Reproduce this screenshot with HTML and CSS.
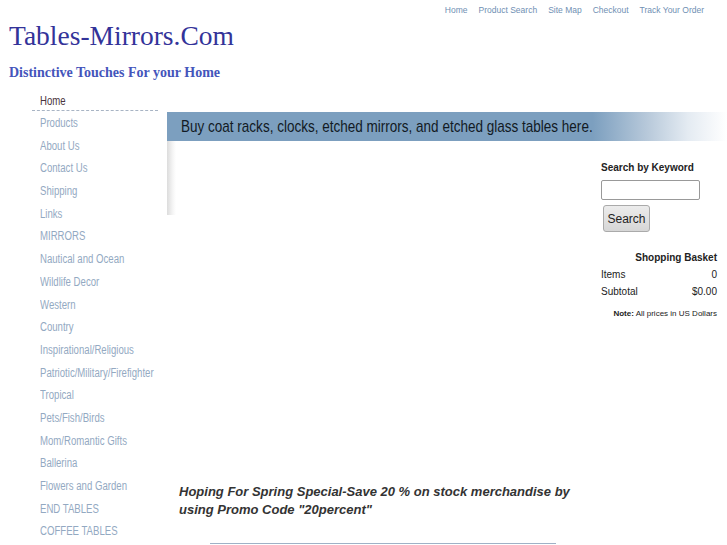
FILE: index.html
```html
<!DOCTYPE html>
<html>
<head>
<meta charset="utf-8">
<link rel="stylesheet" href="styles.css">
</head>
<body>
<div class="toplinks">
  <a href="#">Home</a>
  <a href="#">Product Search</a>
  <a href="#">Site Map</a>
  <a href="#">Checkout</a>
  <a href="#">Track Your Order</a>
</div>
<div class="brand">Tables-Mirrors.Com</div>
<div class="tagline">Distinctive Touches For your Home</div>
<div class="layout">
  <nav class="sidenav">
    <a class="nav-item current" href="#"><span class="narrow">Home</span></a>
    <a class="nav-item" href="#"><span class="narrow">Products</span></a>
    <a class="nav-item" href="#"><span class="narrow">About Us</span></a>
    <a class="nav-item" href="#"><span class="narrow">Contact Us</span></a>
    <a class="nav-item" href="#"><span class="narrow">Shipping</span></a>
    <a class="nav-item" href="#"><span class="narrow">Links</span></a>
    <a class="nav-item" href="#"><span class="narrow">MIRRORS</span></a>
    <a class="nav-item" href="#"><span class="narrow">Nautical and Ocean</span></a>
    <a class="nav-item" href="#"><span class="narrow">Wildlife Decor</span></a>
    <a class="nav-item" href="#"><span class="narrow">Western</span></a>
    <a class="nav-item" href="#"><span class="narrow">Country</span></a>
    <a class="nav-item" href="#"><span class="narrow">Inspirational/Religious</span></a>
    <a class="nav-item" href="#"><span class="narrow">Patriotic/Military/Firefighter</span></a>
    <a class="nav-item" href="#"><span class="narrow">Tropical</span></a>
    <a class="nav-item" href="#"><span class="narrow">Pets/Fish/Birds</span></a>
    <a class="nav-item" href="#"><span class="narrow">Mom/Romantic Gifts</span></a>
    <a class="nav-item" href="#"><span class="narrow">Ballerina</span></a>
    <a class="nav-item" href="#"><span class="narrow">Flowers and Garden</span></a>
    <a class="nav-item" href="#"><span class="narrow">END TABLES</span></a>
    <a class="nav-item" href="#"><span class="narrow">COFFEE TABLES</span></a>
  </nav>
  <div class="content">
    <div class="banner"><span class="narrow banner-text">Buy coat racks, clocks, etched mirrors, and etched glass tables here.</span></div>
    <div class="content-body">
      <div class="main">
        <div class="shade"></div>
        <p class="promo">Hoping For Spring Special-Save 20 % on stock merchandise by using Promo Code "20percent"</p>
        <div class="rule"></div>
      </div>
      <aside class="side">
        <div class="side-title">Search by Keyword</div>
        <input class="search-input" type="text">
        <button class="search-btn">Search</button>
        <div class="basket-title">Shopping Basket</div>
        <div class="basket-row"><span>Items</span><span>0</span></div>
        <div class="basket-row"><span>Subtotal</span><span>$0.00</span></div>
        <div class="note"><b>Note:</b> All prices in US Dollars</div>
      </aside>
    </div>
  </div>
</div>
</body>
</html>
```
FILE: styles.css
```css
html, body { margin: 0; padding: 0; background: #fff; }
body { font-family: "Liberation Sans", Arial, sans-serif; overflow: hidden; }

.toplinks {
  display: flex;
  justify-content: flex-end;
  gap: 11px;
  padding: 4px 23px 0 0;
  height: 12px;
  font-size: 8.5px;
  line-height: 12px;
}
.toplinks a { color: #6f8fb3; text-decoration: none; }

.brand {
  font-family: "Liberation Serif", "Times New Roman", serif;
  font-size: 27.5px;
  color: #333399;
  padding: 4px 0 0 9px;
  line-height: 32px;
}
.tagline {
  font-family: "Liberation Serif", "Times New Roman", serif;
  font-weight: bold;
  font-size: 14px;
  color: #4455bb;
  padding: 12px 0 0 9px;
  line-height: 18px;
}

.narrow {
  display: inline-block;
  white-space: nowrap;
  transform: scaleX(0.8);
  transform-origin: left center;
}
.banner-text { transform: scaleX(0.795); }

.layout {
  display: flex;
  padding: 10px 0 0 32px;
}
.sidenav {
  width: 126px;
  flex: none;
  display: flex;
  flex-direction: column;
}
.nav-item {
  font-family: "Liberation Sans", Arial, sans-serif;
  font-size: 12px;
  color: #93a9c2;
  text-decoration: none;
  padding-left: 8px;
  height: 22.7px;
  line-height: 22px;
}
.nav-item.current {
  color: #4a3540;
  border-bottom: 1px dashed #a8b4c4;
  height: 18px;
  line-height: 18px;
  margin-bottom: 1px;
}

.content {
  flex: 1;
  margin-left: 9px;
  padding-top: 20px;
}
.banner {
  height: 29px;
  line-height: 29px;
  padding-left: 14px;
  font-family: "Liberation Sans", Arial, sans-serif;
  font-size: 17px;
  color: #121a24;
  background: linear-gradient(to right, #7c9fbf 0%, #7c9fbf 76%, #b9cadb 86%, #e4ebf2 93%, #ffffff 100%);
}
.content-body {
  display: flex;
}
.main {
  flex: 1;
  position: relative;
}
.shade {
  position: absolute;
  left: 0;
  top: 0;
  width: 9px;
  height: 74px;
  background: linear-gradient(to right, #dcdcdc, #f4f4f4 60%, #fff);
}
.promo {
  margin: 342px 0 0 12px;
  font-size: 13px;
  line-height: 18px;
  font-weight: bold;
  font-style: italic;
  color: #333;
  width: 400px;
}
.rule {
  margin: 24px 0 0 43px;
  width: 346px;
  border-top: 1px solid #9fb1c6;
}

.side {
  width: 116px;
  flex: none;
  margin-right: 10px;
  padding-top: 21px;
  font-size: 10px;
  color: #222;
}
.side-title {
  font-weight: bold;
  line-height: 12px;
}
.search-input {
  display: block;
  box-sizing: border-box;
  width: 99px;
  height: 20px;
  margin: 6px 0 0 0;
  border: 1px solid #999;
  border-radius: 2px;
  padding: 0;
}
.search-btn {
  display: block;
  margin: 5px 0 0 2px;
  width: 47px;
  height: 27px;
  font-family: "Liberation Sans", Arial, sans-serif;
  font-size: 12px;
  color: #222;
  background: linear-gradient(#ececec, #d6d6d6);
  border: 1px solid #aaa;
  border-radius: 3px;
  padding: 0;
}
.basket-title {
  text-align: right;
  font-weight: bold;
  margin-top: 20px;
  line-height: 12px;
}
.basket-row {
  display: flex;
  justify-content: space-between;
  margin-top: 5px;
  line-height: 12px;
}
.note {
  text-align: right;
  font-size: 8px;
  margin-top: 11px;
  line-height: 10px;
}
```
